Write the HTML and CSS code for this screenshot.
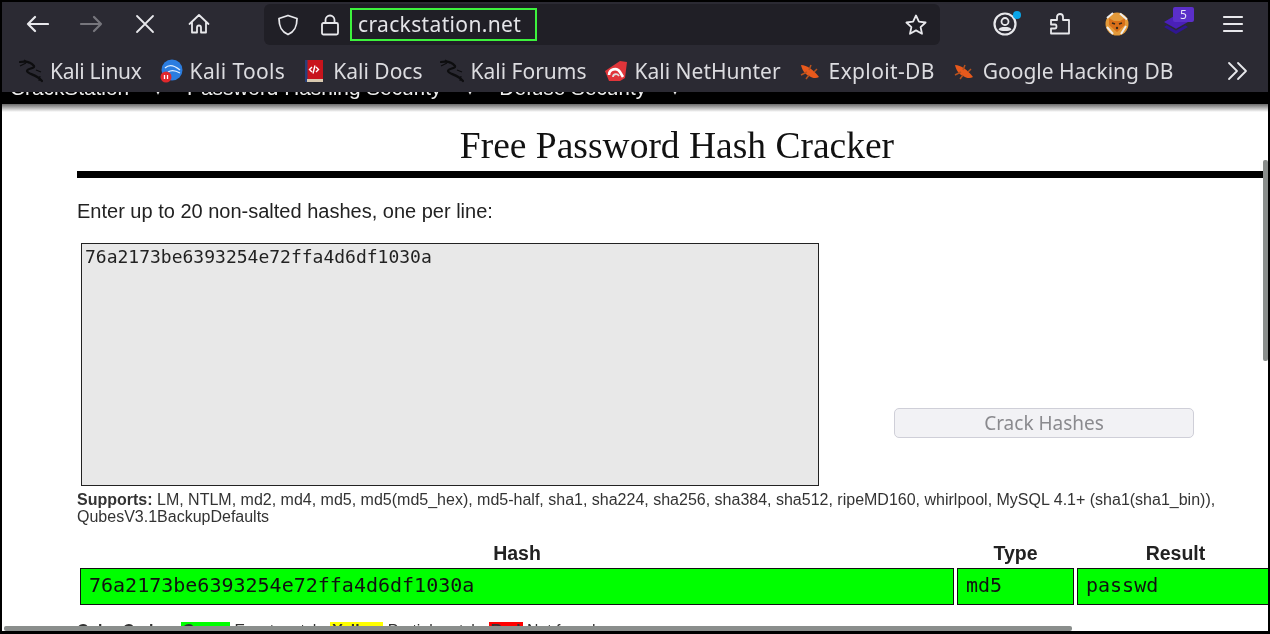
FILE: index.html
```html
<!DOCTYPE html>
<html lang="en">
<head>
  <meta charset="UTF-8" />
  <meta name="viewport" content="width=device-width, initial-scale=1.0"/>
  <title>Free Password Hash Cracker</title>
  <link rel="stylesheet" href="styles.css">
</head>
<body>
  <svg class="defs" width="0" height="0">
    <symbol id="dragon" viewBox="0 0 24 24">
      <path d="M1 3C6 2 12 3 15 7c1 3-7 2-7 5 0 3 9 3 15 10" fill="none" stroke="#0d0d0f" stroke-width="2.200" stroke-linecap="round"/>
      <path d="M5 1l5 3M1 7l6-3M17 11l5 2M20 22l1-5" stroke="#0d0d0f" stroke-width="1.200" fill="none"/>
    </symbol>
    <symbol id="bug" viewBox="0 0 24 24">
      <path d="M3 6c6 0 13 5 18 12-3 2-7 1-10-1C7 15 4 11 3 6z" fill="#e8591c"/>
      <path d="M13 6l-2 5M19 10l-3 3M3 16l6-3M8 20l3-4" stroke="#b5521f" stroke-width="1.500" fill="none"/>
    </symbol>
  </svg>

  <div class="browser">
    <header class="toolbar">
      <div class="nav-row">
        <div class="nav-buttons">
          <svg class="icon" viewBox="0 0 24 24"><path d="M23 12H3M10 5l-7 7 7 7" class="line"/></svg>
          <svg class="icon dim" viewBox="0 0 24 24"><path d="M2 12h20M15 5l7 7-7 7" class="line"/></svg>
          <svg class="icon" viewBox="0 0 24 24"><path d="M4 4l16 16M20 4L4 20" class="line thin"/></svg>
          <svg class="icon" viewBox="0 0 24 24"><path d="M2.500 12L12 3l9.500 9M5 10v10.500h5v-5a2 2 0 0 1 4 0v5h5V10" class="line thin"/></svg>
        </div>
        <div class="urlbar">
          <svg class="icon shield" viewBox="0 0 24 24"><path d="M12 2.500l9 3c0 8-2 13-9 16-7-3-9-8-9-16z" class="line thin"/></svg>
          <svg class="icon lock" viewBox="0 0 24 24"><path d="M7.500 10V7a4.500 4.500 0 0 1 9 0v3M5.500 10h13a1.500 1.500 0 0 1 1.500 1.500V20a1.500 1.500 0 0 1-1.500 1.500h-13A1.500 1.500 0 0 1 4 20v-8.500A1.500 1.500 0 0 1 5.500 10z" class="line thin"/></svg>
          <span class="url-text">crackstation.net</span>
          <svg class="icon star" viewBox="0 0 24 24"><path d="M12 2.500l2.900 6.200 6.700.8-5 4.600 1.400 6.700-6-3.400-6 3.400 1.400-6.700-5-4.600 6.700-.8z" class="line thin"/></svg>
        </div>
        <div class="extensions">
          <span class="ext profile">
            <svg class="icon" viewBox="0 0 24 24"><circle cx="12" cy="12" r="10.500" class="line"/><circle cx="12" cy="9.500" r="3.500" class="line thin"/><path d="M5.500 17.500c1-2 3-2.500 6.500-2.500s5.500.5 6.500 2.500c-2 2-11 2-13 0z" fill="#e6e6ea"/></svg>
            <span class="dot"></span>
          </span>
          <svg class="icon ext" viewBox="0 0 24 24"><path d="M3 21.500v-5h4c2 0 2-4 0-4H3V8h6V5c0-4 6-4 6 0v3h6v13.500z" class="line thin"/></svg>
          <svg class="icon ext fox" viewBox="0 0 24 24"><circle cx="12" cy="12" r="11.500" fill="#e39a3a"/><path d="M4 6l5 3h6l5-3 0 7-8 7-8-7z" fill="#d9701a"/><path d="M15 1.500l7 6M21 14l-5 8M2 15l6 7M8 1L2 6" stroke="#eee" stroke-width="2" fill="none"/><path d="M7 11l3 1M17 11l-3 1" stroke="#3a2a1a" stroke-width="1.500"/><circle cx="12" cy="16" r="1.200" fill="#3a2a1a"/></svg>
          <span class="ext stack">
            <svg class="icon" viewBox="2 2 26 22" preserveAspectRatio="none"><path d="M5 14l10 6 10-6 3 2-13 8-13-8z" fill="#2f1690"/><path d="M15 2l13 8-13 8-13-8z" fill="#4a20b8"/></svg>
            <span class="badge">5</span>
          </span>
          <svg class="icon ext burger" viewBox="0 0 24 24"><path d="M3 5h18M3 12h18M3 19h18" class="line"/></svg>
        </div>
      </div>
      <nav class="bookmarks">
        <a class="bookmark tight"><svg class="fav"><use href="#dragon"/></svg>Kali Linux</a>
        <a class="bookmark loose">
          <svg class="fav" viewBox="0 0 24 24"><circle cx="13" cy="11" r="10.500" fill="#2b7de0"/><path d="M6 9c4-4 9-3 15 2M9 13c3-2 7-2 12 1" stroke="#dfeeff" stroke-width="1.300" fill="none"/><circle cx="7" cy="18" r="5.500" fill="#e0282c"/><path d="M5.500 16v4M8.500 16v4" stroke="#fff" stroke-width="1.300"/></svg>
          Kali Tools
        </a>
        <a class="bookmark">
          <svg class="fav" viewBox="0 0 24 24"><rect x="3" y="1" width="18" height="22" fill="#c8141c"/><rect x="3" y="1" width="2.500" height="22" fill="#27407a"/><rect x="5" y="20" width="16" height="3" fill="#d9c9b0"/><path d="M10 8l-2.500 2.500L10 13M14 8l2.500 2.500L14 13M13 6.500l-2 8" stroke="#fff" stroke-width="1.400" fill="none"/></svg>
          Kali Docs
        </a>
        <a class="bookmark"><svg class="fav"><use href="#dragon"/></svg>Kali Forums</a>
        <a class="bookmark">
          <svg class="fav" viewBox="0 0 24 24"><path d="M1 12L16 2l7 1-2 16-5 3H5z" fill="#e0353a"/><path d="M5 16c0-6 8-8 11-3l3 5" stroke="#fff" stroke-width="2.600" fill="none"/><path d="M9 18c0-3 4-4 6-1" stroke="#ddd" stroke-width="1.800" fill="none"/></svg>
          Kali NetHunter
        </a>
        <a class="bookmark loose"><svg class="fav"><use href="#bug"/></svg>Exploit-DB</a>
        <a class="bookmark"><svg class="fav"><use href="#bug"/></svg>Google Hacking DB</a>
        <svg class="icon more" viewBox="0 0 24 24"><path d="M3 4l8 8-8 8M12 4l8 8-8 8" class="line thin"/></svg>
      </nav>
    </header>

    <div class="site-menu">
      <ul class="menu-items">
        <li>CrackStation</li><li class="caret">▾</li>
        <li>Password Hashing Security</li><li class="caret">▾</li>
        <li>Defuse Security</li><li class="caret">▾</li>
      </ul>
    </div>

    <main class="page">
      <div class="content">
        <h1 class="title">Free Password Hash Cracker</h1>
        <p class="intro">Enter up to 20 non-salted hashes, one per line:</p>
        <form class="crack-form">
          <textarea class="hash-input" readonly>76a2173be6393254e72ffa4d6df1030a</textarea>
          <button class="crack-btn" type="button" disabled>Crack Hashes</button>
        </form>
        <p class="supports"><b>Supports:</b> LM, NTLM, md2, md4, md5, md5(md5_hex), md5-half, sha1, sha224, sha256, sha384, sha512, ripeMD160, whirlpool, MySQL 4.1+ (sha1(sha1_bin)), QubesV3.1BackupDefaults</p>
        <table class="results">
          <tr><th class="col-hash">Hash</th><th class="col-type">Type</th><th>Result</th></tr>
          <tr class="found"><td>76a2173be6393254e72ffa4d6df1030a</td><td>md5</td><td>passwd</td></tr>
        </table>
        <p class="legend"><b>Color Codes:</b> <span class="green">Green</span> Exact match, <span class="yellow">Yellow</span> Partial match, <span class="red">Red</span> Not found.</p>
      </div>
    </main>

    <div class="scrollbar vertical"></div>
    <div class="scrollbar horizontal"></div>
  </div>
</body>
</html>
```

FILE: styles.css
```css
* {
  box-sizing: border-box;
}
html, body {
  margin: 0;
  height: 100%;
  overflow: hidden;
  background: #000;
}
.defs {
  position: absolute;
}
.browser {
  position: relative;
  width: 1270px;
  height: 634px;
  padding: 2px 2px 3px 2px;
  display: flex;
  flex-direction: column;
  overflow: hidden;
  background: #000;
  filter: blur(.35px);
}

/* browser chrome */
.toolbar {
  background: #2b2a33;
  height: 90px;
  flex: none;
  color: #e4e4e8;
  font-family: "Noto Sans", sans-serif;
}
.nav-row {
  height: 44px;
  display: flex;
  align-items: center;
}
.icon {
  width: 24px;
  height: 24px;
  flex: none;
  display: block;
}
.line {
  fill: none;
  stroke: #e8e8ec;
  stroke-width: 2.200;
  stroke-linecap: round;
  stroke-linejoin: round;
}
.line.thin {
  stroke-width: 1.800;
}
.dim {
  opacity: .4;
}
.nav-buttons {
  width: 262px;
  padding-left: 23px;
  display: flex;
  gap: 30px;
}
.urlbar {
  width: 676px;
  height: 41px;
  margin-top: 1px;
  background: #201f26;
  border-radius: 6px;
  display: flex;
  align-items: center;
  padding: 0 12px;
}
.lock {
  margin-left: 18px;
}
.url-text {
  margin-left: 8px;
  height: 33px;
  width: 187px;
  border: 2px solid #3df23d;
  padding-left: 6px;
  line-height: 29px;
  font-size: 21px;
  letter-spacing: .35px;
  white-space: nowrap;
  color: #e4e4e8;
}
.star {
  margin-left: auto;
}
.extensions {
  flex: 1;
  display: flex;
  align-items: center;
  padding-left: 53px;
  gap: 31px;
}
.ext {
  position: relative;
  display: block;
  width: 24px;
  height: 24px;
  flex: none;
}
.dot {
  position: absolute;
  top: -1px;
  right: -4px;
  width: 8px;
  height: 8px;
  border-radius: 50%;
  background: #0aa5e8;
}
.fox {
  margin-left: 2px;
}
.stack {
  width: 30px;
  margin-left: 1px;
}
.stack .icon {
  width: 24px;
  height: 19px;
  margin: 3px 0 0 3px;
}
.burger {
  margin-left: -1px;
}
.badge {
  position: absolute;
  top: -5px;
  left: 12px;
  width: 21px;
  height: 15px;
  border-radius: 2px;
  background: #5b2fc9;
  color: #e8e4f8;
  font-size: 12px;
  line-height: 15px;
  text-align: center;
}
.bookmarks {
  height: 46px;
  padding: 4px 0 0 17px;
  display: flex;
  align-items: center;
  gap: 17px;
  position: relative;
}
.bookmark {
  display: flex;
  align-items: center;
  white-space: nowrap;
  font-size: 21px;
  line-height: 42px;
  color: #dcdce0;
}
.tight {
  letter-spacing: -.3px;
}
.loose {
  letter-spacing: .35px;
}
.fav {
  width: 24px;
  height: 24px;
  flex: none;
  margin-right: 7px;
}
.more {
  position: absolute;
  right: 18px;
  top: 13px;
}

/* site menu, mostly hidden behind the toolbar */
.site-menu {
  height: 12px;
  flex: none;
  overflow: hidden;
  background: #000;
}
.menu-items {
  list-style: none;
  margin: -15px 0 0;
  padding: 0 0 0 8px;
  display: flex;
  color: #eee;
  font: 20.800px/22px "Liberation Sans", sans-serif;
  white-space: nowrap;
}
.caret {
  width: 58px;
  text-align: center;
  font-size: 20px;
}

/* page */
.page {
  flex: 1;
  min-height: 0;
  overflow: hidden;
  background: linear-gradient(#6a6a6a, #fff 8px);
  font-family: "Liberation Sans", sans-serif;
  color: #222;
}
.content {
  width: 1200px;
  margin-left: 75px;
}
.title {
  margin: 0;
  padding-top: 21px;
  height: 74px;
  border-bottom: 7px solid #000;
  text-align: center;
  font: normal 37.500px/42px "Liberation Serif", serif;
  color: #111;
}
.intro {
  margin: 23px 0 0;
  font-size: 20px;
  line-height: 20px;
}
.crack-form {
  margin: 22px 0 0 4px;
  display: flex;
  align-items: flex-end;
}
.hash-input {
  display: block;
  width: 738px;
  height: 243px;
  padding: 2px 3px;
  border: 1.500px solid #222;
  border-radius: 0;
  background: #e8e8e8;
  color: #222;
  font: 18px/22px "DejaVu Sans Mono", monospace;
  resize: none;
  outline: none;
}
.crack-btn {
  margin: 0 0 48px 75px;
  width: 300px;
  height: 30px;
  padding: 0;
  border: 1.500px solid #cfcfd8;
  border-radius: 5px;
  background: #f2f2f5;
  color: #8a8a8e;
  font: 19px/26px "Noto Sans", sans-serif;
}
.supports {
  margin: 5px 0 0;
  font-size: 16px;
  line-height: 17px;
  color: #333;
}
.results {
  margin-top: 17px;
  width: 1200px;
  table-layout: fixed;
  border-collapse: separate;
  border-spacing: 3px;
}
.results th {
  padding: 0;
  height: 20px;
  vertical-align: top;
  font-size: 19.500px;
  line-height: 16px;
  color: #222;
}
.col-hash {
  width: 874px;
}
.col-type {
  width: 117px;
}
.results td {
  height: 37px;
  padding: 0 8px 3px;
  border: 1.500px solid #111;
  background: #0f0;
  color: #111;
  font: 20px/24px "DejaVu Sans Mono", monospace;
}
.legend {
  margin: 14px 0 0;
  font-size: 15.800px;
  line-height: 17px;
  white-space: nowrap;
  color: #333;
}
.green, .yellow, .red {
  padding: 0 2px;
  font-weight: bold;
}
.green {
  background: #0f0;
}
.yellow {
  background: #ff0;
}
.red {
  background: #f00;
}

/* overlay scrollbars */
.scrollbar {
  position: absolute;
  background: #8a8e8c;
  border-radius: 2px;
}
.vertical {
  top: 160px;
  left: 1263px;
  width: 5px;
  height: 201px;
}
.horizontal {
  top: 626px;
  left: 4px;
  width: 1068px;
  height: 5px;
}
```
